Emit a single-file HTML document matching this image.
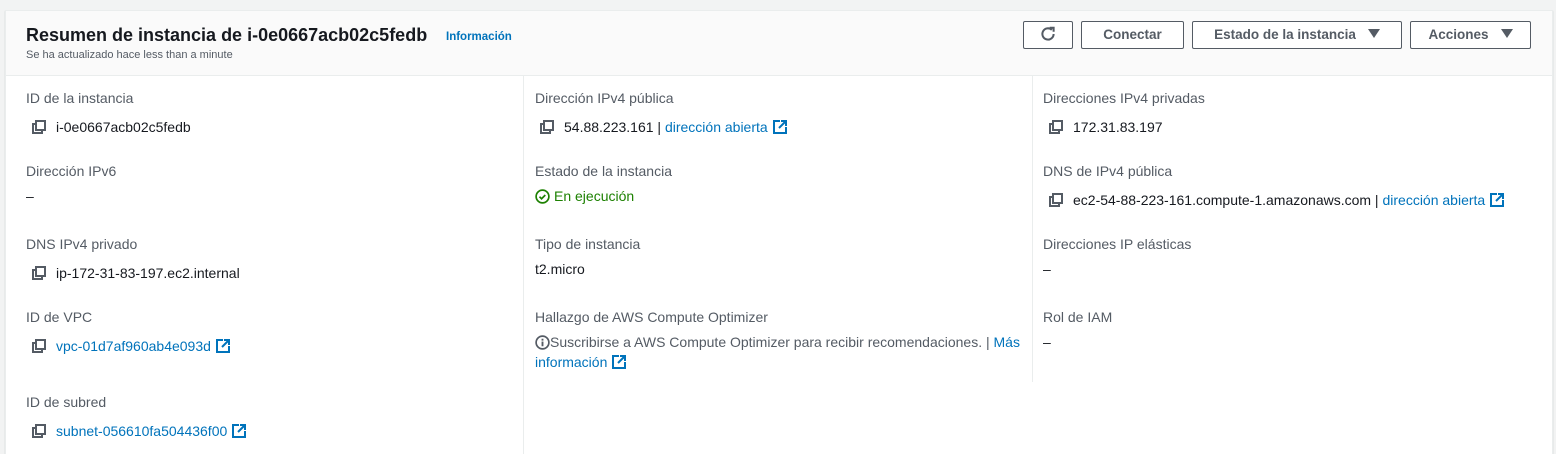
<!DOCTYPE html>
<html><head><meta charset="utf-8"><style>
html,body{margin:0;width:1556px;height:454px;overflow:hidden}
body{background:#f2f3f3;font-family:"Liberation Sans",sans-serif;font-size:14px;color:#16191f;position:relative}
.card{position:absolute;left:5px;top:10px;width:1546px;height:450px;background:#fff;border:1px solid #eaeded;box-shadow:0 1px 1px rgba(0,28,36,.2)}
.hdr{position:absolute;left:0;top:0;right:0;height:64px;background:#fafafa;border-bottom:1px solid #eaeded}
.a{position:absolute;white-space:nowrap;line-height:18px}
.l{color:#545b64}
.lk{color:#0073bb}
.vl{position:absolute;width:1px;background:#eaeded}
.btn{position:absolute;top:21px;height:26px;border:1px solid #545b64;border-radius:2px;background:#fff;font-weight:bold;color:#545b64;font-size:13.5px;line-height:26px;text-align:center;box-sizing:content-box}
.cp{position:absolute;width:14px;height:14px}
.ex{display:inline-block;vertical-align:-2px;margin-left:5px}
.tri{display:inline-block;width:0;height:0;border-left:6px solid transparent;border-right:6px solid transparent;border-top:9px solid #545b64;margin-left:12px;vertical-align:1px}
</style></head><body>
<div class="card"><div class="hdr"></div></div>
<div class="a" style="left:26px;top:24px;font-size:18px;font-weight:bold;line-height:22px">Resumen de instancia de i-0e0667acb02c5fedb</div>
<div class="a lk" style="left:446px;top:28px;font-size:11.5px;font-weight:bold">Información</div>
<div class="a l" style="left:26px;top:48px;font-size:11px;line-height:14px">Se ha actualizado hace less than a minute</div>

<div class="btn" style="left:1023px;width:48px"><svg width="18" height="18" viewBox="0 0 16 16" style="vertical-align:-4px"><path d="M13 8a5 5 0 1 1-1.6-3.7" fill="none" stroke="#545b64" stroke-width="1.8"/><path d="M9.5 2.5h3.5v3.5" fill="none" stroke="#545b64" stroke-width="1.8"/></svg></div>
<div class="btn" style="left:1081px;width:101px">Conectar</div>
<div class="btn" style="left:1192px;width:208px">Estado de la instancia<span class="tri"></span></div>
<div class="btn" style="left:1410px;width:119px">Acciones<span class="tri"></span></div>

<div class="vl" style="left:523px;top:76px;height:378px"></div>
<div class="vl" style="left:1032px;top:76px;height:306px"></div>

<svg width="0" height="0" style="position:absolute"><defs>
<symbol id="c" viewBox="0 0 14 14"><rect x="4" y="1" width="9" height="9" fill="none" stroke="#545b64" stroke-width="2"/><path d="M4 4H1v9h9v-3" fill="none" stroke="#545b64" stroke-width="2"/></symbol>
<symbol id="e" viewBox="0 0 14 14"><path d="M7 1H1v12h12V7" fill="none" stroke="#0073bb" stroke-width="2"/><path d="M8 1h5v5M13 1L6 8" fill="none" stroke="#0073bb" stroke-width="2"/></symbol>
</defs></svg>

<!-- col1 -->
<div class="a l" style="left:26px;top:89px">ID de la instancia</div>
<svg class="cp" style="left:32px;top:120px"><use href="#c"/></svg>
<div class="a" style="left:56px;top:118px">i-0e0667acb02c5fedb</div>
<div class="a l" style="left:26px;top:162px">Dirección IPv6</div>
<div class="a" style="left:26px;top:187px">–</div>
<div class="a l" style="left:26px;top:235px">DNS IPv4 privado</div>
<svg class="cp" style="left:32px;top:266px"><use href="#c"/></svg>
<div class="a" style="left:56px;top:264px">ip-172-31-83-197.ec2.internal</div>
<div class="a l" style="left:26px;top:308px">ID de VPC</div>
<svg class="cp" style="left:32px;top:339px"><use href="#c"/></svg>
<div class="a lk" style="left:56px;top:337px">vpc-01d7af960ab4e093d<svg class="ex" width="14" height="14"><use href="#e"/></svg></div>
<div class="a l" style="left:26px;top:393px">ID de subred</div>
<svg class="cp" style="left:32px;top:424px"><use href="#c"/></svg>
<div class="a lk" style="left:56px;top:422px">subnet-056610fa504436f00<svg class="ex" width="14" height="14"><use href="#e"/></svg></div>

<!-- col2 -->
<div class="a l" style="left:535px;top:89px">Dirección IPv4 pública</div>
<svg class="cp" style="left:540px;top:120px"><use href="#c"/></svg>
<div class="a" style="left:564px;top:118px">54.88.223.161 | <span class="lk">dirección abierta</span><svg class="ex" width="14" height="14"><use href="#e"/></svg></div>
<div class="a l" style="left:535px;top:162px">Estado de la instancia</div>
<div class="a" style="left:535px;top:187px;color:#1d8102"><svg width="15" height="15" viewBox="0 0 16 16" style="vertical-align:-3px;margin-right:4px"><circle cx="8" cy="8" r="6.8" fill="none" stroke="#1d8102" stroke-width="1.8"/><path d="M4.8 8.2l2.2 2.2 4-4" fill="none" stroke="#1d8102" stroke-width="1.8"/></svg>En ejecución</div>
<div class="a l" style="left:535px;top:235px">Tipo de instancia</div>
<div class="a" style="left:535px;top:260px">t2.micro</div>
<div class="a l" style="left:535px;top:308px">Hallazgo de AWS Compute Optimizer</div>
<div class="a l" style="left:535px;top:332px;line-height:20px;white-space:normal;width:490px"><svg width="15" height="15" viewBox="0 0 16 16" style="vertical-align:-3px"><circle cx="8" cy="8" r="6.8" fill="none" stroke="#545b64" stroke-width="1.8"/><rect x="7" y="7" width="2" height="5" fill="#545b64"/><rect x="7" y="4" width="2" height="2" fill="#545b64"/></svg>Suscribirse a AWS Compute Optimizer para recibir recomendaciones. | <span class="lk">Más información</span><svg class="ex" width="14" height="14"><use href="#e"/></svg></div>

<!-- col3 -->
<div class="a l" style="left:1043px;top:89px">Direcciones IPv4 privadas</div>
<svg class="cp" style="left:1049px;top:120px"><use href="#c"/></svg>
<div class="a" style="left:1073px;top:118px">172.31.83.197</div>
<div class="a l" style="left:1043px;top:162px">DNS de IPv4 pública</div>
<svg class="cp" style="left:1049px;top:193px"><use href="#c"/></svg>
<div class="a" style="left:1073px;top:191px">ec2-54-88-223-161.compute-1.amazonaws.com | <span class="lk">dirección abierta</span><svg class="ex" width="14" height="14"><use href="#e"/></svg></div>
<div class="a l" style="left:1043px;top:235px">Direcciones IP elásticas</div>
<div class="a" style="left:1043px;top:260px">–</div>
<div class="a l" style="left:1043px;top:308px">Rol de IAM</div>
<div class="a" style="left:1043px;top:333px">–</div>
</body></html>
